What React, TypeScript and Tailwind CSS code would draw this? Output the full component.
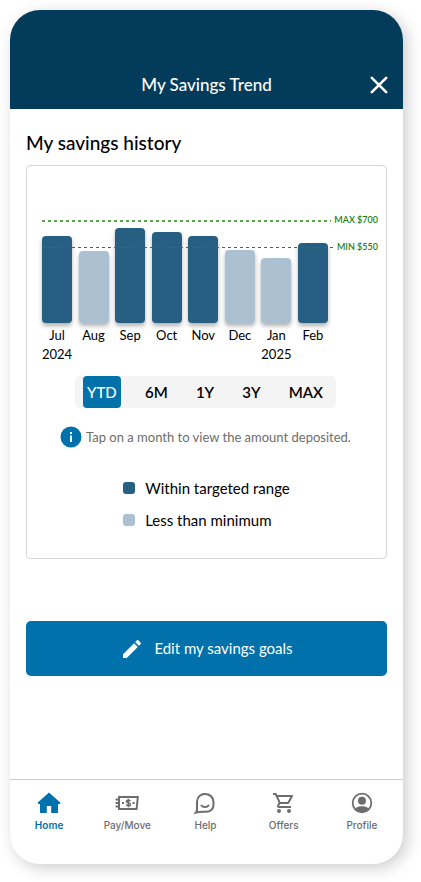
import { useState } from "react";
import type { ReactNode } from "react";

const months = [
  { name: "Jul", year: "2024", height: 87, within: true },
  { name: "Aug", year: "", height: 72, within: false },
  { name: "Sep", year: "", height: 95, within: true },
  { name: "Oct", year: "", height: 91, within: true },
  { name: "Nov", year: "", height: 87, within: true },
  { name: "Dec", year: "", height: 73, within: false },
  { name: "Jan", year: "2025", height: 65, within: false },
  { name: "Feb", year: "", height: 80, within: true },
];

const ranges = ["YTD", "6M", "1Y", "3Y", "MAX"];

function LimitLine({ label, color, thickness }: { label: string; color: string; thickness: number }) {
  return (
    <div className="flex h-3 items-center gap-[3px] text-[9px] leading-3 font-semibold text-[#1f8012]">
      <svg className="h-3 min-w-0 flex-1" shapeRendering="crispEdges" aria-hidden="true">
        <line x1="0" y1={6 + thickness / 2} x2="100%" y2={6 + thickness / 2} stroke={color} strokeWidth={thickness} strokeDasharray="3 3" />
      </svg>
      <span>{label}</span>
    </div>
  );
}

function Chart() {
  return (
    <div className="relative pt-[62px] pr-2 pl-[15px]">
      <div className="mr-[50px] flex justify-between">
        {months.map((m) => (
          <button key={m.name} type="button" className="flex w-[30px] flex-col items-center text-[13px] leading-[19px] text-black">
            <span className="flex h-[95px] w-full items-end">
              <span
                className={`w-full rounded-[4px] shadow-[0_3px_4px_rgba(0,0,0,0.3)] ${m.within ? "bg-[#265f82]" : "bg-[#abc1d2]"}`}
                style={{ height: m.height }}
              />
            </span>
            <span className="mt-[3px]">{m.name}</span>
            <span className="h-[19px]">{m.year}</span>
          </button>
        ))}
      </div>
      <div className="pointer-events-none absolute top-12 right-2 left-[15px] z-10 flex flex-col gap-[15px]">
        <LimitLine label="MAX $700" color="#5aa64c" thickness={2} />
        <LimitLine label="MIN $550" color="#1f8a08" thickness={1} />
      </div>
    </div>
  );
}

function Legend({ color, children }: { color: string; children: ReactNode }) {
  return (
    <li className="flex items-center gap-[10px]">
      <span className={`size-3 rounded-[3px] ${color}`} />
      {children}
    </li>
  );
}

function HomeIcon() {
  return (
    <svg viewBox="0 0 24 24" className="size-6" fill="currentColor" aria-hidden="true">
      <path d="M12 1.500.8 11.600V13H3v9h6.800v-7h4.400v7H21v-9h2.200v-1.400z" />
    </svg>
  );
}

function PayIcon() {
  return (
    <svg viewBox="0 0 24 24" className="size-6" fill="none" stroke="currentColor" aria-hidden="true">
      <path strokeWidth="2" d="M4 6h18.800l-1.200 12H4z" />
      <path strokeWidth="1.800" d="M.6 8.500h3.400M.6 12h3.400M.6 15.500h3.400" />
      <path strokeWidth="1.500" d="M15.300 10.300c-.4-.7-1.100-1-2-1-1.200 0-2 .5-2 1.300 0 2 4.200.8 4.200 2.900 0 .8-.9 1.300-2.100 1.300-1 0-1.800-.4-2.200-1.100M13.300 7.800v8.400" />
      <path strokeWidth="2" d="M7 12h2M17.600 12h2" />
    </svg>
  );
}

function HelpIcon() {
  return (
    <svg viewBox="0 0 24 24" className="size-6" fill="none" stroke="currentColor" strokeWidth="2" aria-hidden="true">
      <path d="M3 21.500c1-1.200 1.200-2.500 1-4.500V11c0-5 3.500-8 8-8s8.500 3 8.500 8v2.500c0 4.500-3 7-7 7.200-3.500.2-6.500-.2-10.500.8z" />
      <path d="M8 14c2 2.800 6 2.800 8 0" />
    </svg>
  );
}

function CartIcon() {
  return (
    <svg viewBox="0 0 24 24" className="size-6" fill="currentColor" aria-hidden="true">
      <path d="M15.550 13c.75 0 1.410-.41 1.750-1.030l3.580-6.490A.996.996 0 0 0 20.010 4H5.210l-.94-2H1v2h2l3.600 7.590-1.350 2.440C4.520 15.370 5.480 17 7 17h12v-2H7l1.100-2h7.450zM6.160 6h12.150l-2.760 5H8.530L6.160 6zM7 18c-1.100 0-1.990.9-1.990 2S5.900 22 7 22s2-.9 2-2-.9-2-2-2zm10 0c-1.100 0-1.990.9-1.990 2s.89 2 1.990 2 2-.9 2-2-.9-2-2-2z" />
    </svg>
  );
}

function ProfileIcon() {
  return (
    <svg viewBox="0 0 24 24" className="size-6" aria-hidden="true">
      <circle cx="12" cy="12" r="9.300" fill="none" stroke="currentColor" strokeWidth="1.800" />
      <circle cx="12" cy="9.800" r="4" fill="currentColor" />
      <path fill="currentColor" d="M5.200 17.600c1.800-1.800 4.300-2.400 6.800-2.400s5 .6 6.800 2.400C17 20 14.600 21.300 12 21.300S7 20 5.200 17.600z" />
    </svg>
  );
}

const tabs = [
  { name: "Home", icon: <HomeIcon /> },
  { name: "Pay/Move", icon: <PayIcon /> },
  { name: "Help", icon: <HelpIcon /> },
  { name: "Offers", icon: <CartIcon /> },
  { name: "Profile", icon: <ProfileIcon /> },
];

export default function App() {
  const [range, setRange] = useState("YTD");
  return (
    <div className="min-h-screen bg-white pt-[10px] pr-[18px] pb-[18px] pl-[10px] font-['Lato','Open_Sans',sans-serif] text-black">
      <div className="flex min-h-[854px] flex-col overflow-hidden rounded-[30px] bg-white shadow-[4px_4px_16px_rgba(0,0,0,0.2)]">
        <header className="grid grid-cols-[1fr_auto_1fr] items-center bg-[#033c5a] px-3 pt-[62px] pb-[11px] text-white">
          <h1 className="col-start-2 text-[17px] leading-[26px] font-medium">My Savings Trend</h1>
          <button type="button" aria-label="Close" className="justify-self-end">
            <svg viewBox="0 0 24 24" className="size-6" fill="none" stroke="currentColor" strokeWidth="2.600" strokeLinecap="round" aria-hidden="true">
              <path d="M4.800 4.800l14.400 14.400M19.200 4.800 4.800 19.200" />
            </svg>
          </button>
        </header>

        <main className="flex-1 px-4 pt-[22px]">
          <h2 className="text-[19px] leading-6 font-medium">My savings history</h2>
          <section className="mt-[10px] rounded-[4px] border border-[#d6d6d6] pb-[26px]">
            <Chart />
            <div className="mt-3 mr-[50px] ml-12 flex h-8 items-stretch justify-between rounded-[5px] bg-[#f4f4f4] pr-[9px] pl-2 text-[15px]">
              {ranges.map((r) => (
                <button
                  key={r}
                  type="button"
                  aria-pressed={r === range}
                  onClick={() => setRange(r)}
                  className={`rounded-[4px] px-1 ${r === range ? "bg-[#0071aa] font-medium text-white" : "font-semibold"}`}
                >
                  {r}
                </button>
              ))}
            </div>
            <p className="mt-[18px] flex items-center justify-center gap-1 pr-[2px] text-[13px] leading-[22px] text-[#6d6d6d]">
              <svg viewBox="0 0 22 22" className="size-[22px]" aria-hidden="true">
                <circle cx="11" cy="11" r="10.500" fill="#0071aa" />
                <path fill="#fff" d="M10 6h2v2h-2zM10 9.500h2V16h-2z" />
              </svg>
              Tap on a month to view the amount deposited.
            </p>
            <ul className="mx-auto mt-7 flex w-fit flex-col gap-2 text-[15px] leading-6">
              <Legend color="bg-[#265f82]">Within targeted range</Legend>
              <Legend color="bg-[#abc1d2]">Less than minimum</Legend>
            </ul>
          </section>
          <button type="button" className="mt-[62px] flex h-[55px] w-full items-center justify-center gap-[10px] rounded-[5px] bg-[#0071aa] text-[15px] text-white">
            <svg viewBox="0 0 24 24" className="size-6" fill="currentColor" aria-hidden="true">
              <path d="M3 17.250V21h3.750L17.810 9.940l-3.750-3.750L3 17.250zM20.710 7.040a.996.996 0 0 0 0-1.410l-2.340-2.340a.996.996 0 0 0-1.410 0l-1.830 1.830 3.750 3.750 1.830-1.830z" />
            </svg>
            Edit my savings goals
          </button>
        </main>

        <nav className="grid h-[85px] grid-cols-5 border-t border-[#cccccc] pt-[11px] pr-[2px] font-['Inter',sans-serif] text-[10px] leading-4 font-medium text-[#6d6d6d]">
          {tabs.map((t) => (
            <a key={t.name} href="#" className={`flex flex-col items-center gap-[2px] ${t.name === "Home" ? "font-semibold text-[#0071aa]" : ""}`}>
              {t.icon}
              {t.name}
            </a>
          ))}
        </nav>
      </div>
    </div>
  );
}
